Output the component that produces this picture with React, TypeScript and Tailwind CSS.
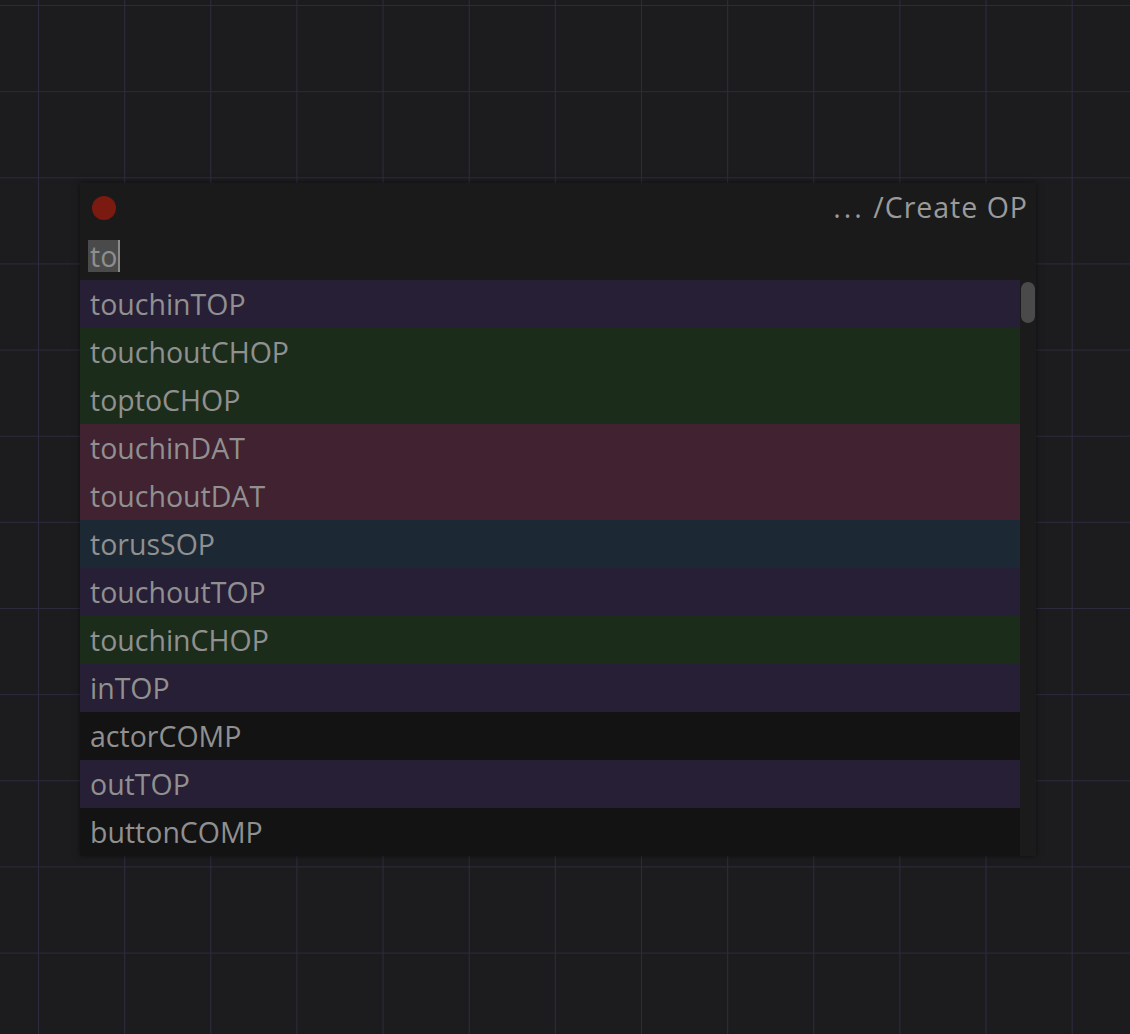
import React from 'react'

type Row = { name: string; family: 'TOP' | 'CHOP' | 'DAT' | 'SOP' | 'COMP' }

const rows: Row[] = [
  { name: 'touchinTOP', family: 'TOP' },
  { name: 'touchoutCHOP', family: 'CHOP' },
  { name: 'toptoCHOP', family: 'CHOP' },
  { name: 'touchinDAT', family: 'DAT' },
  { name: 'touchoutDAT', family: 'DAT' },
  { name: 'torusSOP', family: 'SOP' },
  { name: 'touchoutTOP', family: 'TOP' },
  { name: 'touchinCHOP', family: 'CHOP' },
  { name: 'inTOP', family: 'TOP' },
  { name: 'actorCOMP', family: 'COMP' },
  { name: 'outTOP', family: 'TOP' },
  { name: 'buttonCOMP', family: 'COMP' },
]

const familyBg: Record<Row['family'], string> = {
  TOP: 'bg-[#271f36]',
  CHOP: 'bg-[#1b2d1a]',
  DAT: 'bg-[#412230]',
  SOP: 'bg-[#1c2834]',
  COMP: 'bg-[#131313]',
}

export default function App() {
  return (
    <div
      className="relative h-[1034px] w-[1130px] overflow-hidden bg-[#1c1c1f] font-['Open_Sans',sans-serif] bg-[linear-gradient(to_right,#2e2b40_1px,transparent_1px),linear-gradient(to_bottom,#2c2a3c_1px,transparent_1px)] bg-[size:86.15px_86.15px] bg-[position:38px_5px]"
    >
      <div className="absolute left-[80px] top-[183px] flex w-[956px] flex-col bg-[#1a1a1a] shadow-[0_0_6px_rgba(0,0,0,0.5)]">
        <div className="flex h-[49px] items-center justify-between pl-[12px] pr-[8px]">
          <span className="h-[24px] w-[24px] rounded-full bg-[#7a1a10]" />
          <span className="text-[28.5px] font-medium tracking-[1px] text-[#9a9a9a]">
            <span className="tracking-[3px]">...</span> /Create OP
          </span>
        </div>
        <div className="flex h-[48px] items-center pl-[8px]">
          <span className="flex h-[32px] items-center bg-[#4a4a4a] pl-[2px] pr-[1px] text-[28.5px] leading-none text-[#8e8e8e]">to</span>
          <span className="h-[32px] w-[2px] bg-[#8a8a8a]" />
        </div>
        <div className="flex">
          <div className="flex w-[940px] flex-col">
            {rows.map((row) => (
              <div key={row.name} className={`flex h-[48px] items-center pl-[10px] text-[28.5px] text-[#909090] ${familyBg[row.family]}`}>
                {row.name}
              </div>
            ))}
          </div>
          <div className="relative flex-1 bg-[#1b1b1b]">
            <div className="absolute left-[1px] top-[2px] h-[41px] w-[14px] rounded-full bg-[#4a4a4a]" />
          </div>
        </div>
      </div>
    </div>
  )
}
